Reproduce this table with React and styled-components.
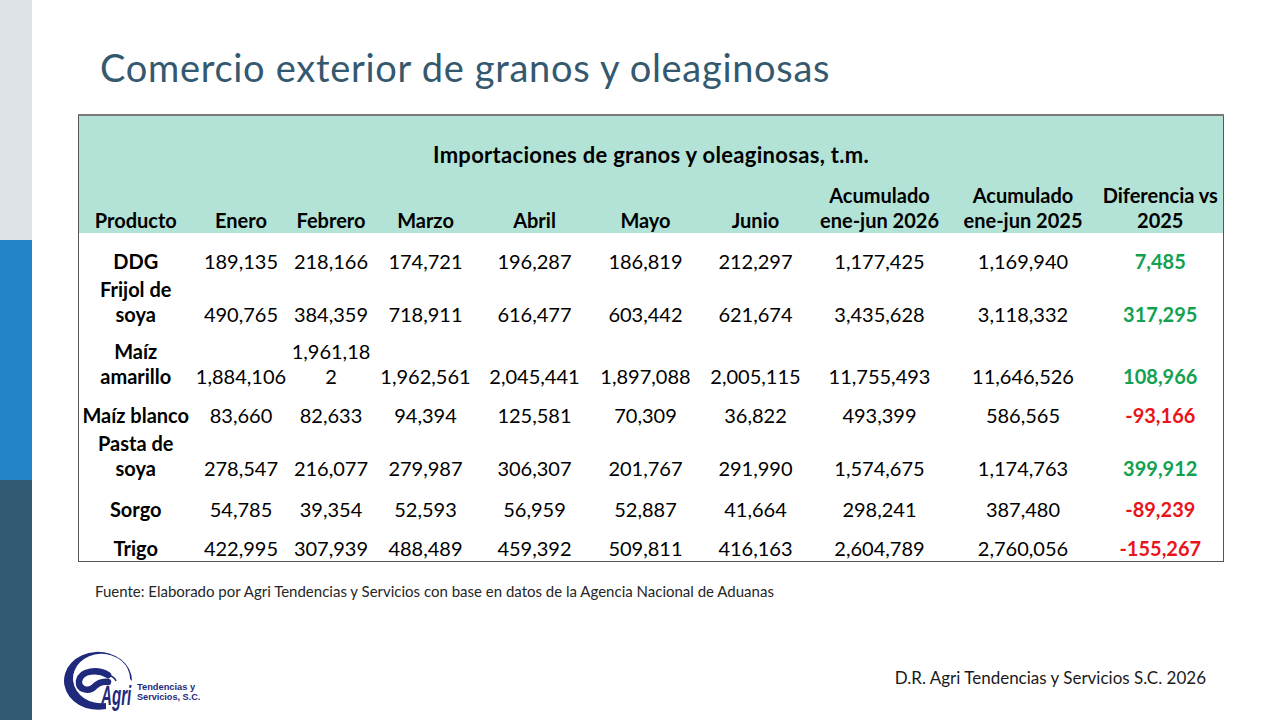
import React from 'react';
import styled, { createGlobalStyle } from 'styled-components';

const Global = createGlobalStyle`
  html, body { margin: 0; padding: 0; }
  body {
    width: 1280px; height: 720px; overflow: hidden; background: #fff;
    font-family: Lato, "Open Sans", "Liberation Sans", sans-serif;
  }
`;

const Slide = styled.div`
  display: flex;
  width: 1280px;
  height: 720px;
  background: #fff;
`;

const Sidebar = styled.aside`
  width: 32px;
  flex-shrink: 0;
  display: flex;
  flex-direction: column;
`;

const Band = styled.div`
  flex: 1;
  background: ${(p) => p.$color};
`;

const Main = styled.main`
  flex: 1;
  min-width: 0;
  display: flex;
  flex-direction: column;
`;

const Title = styled.h1`
  margin: 44px 0 0 68px;
  font-weight: 400;
  font-size: 38px;
  letter-spacing: 0.7px;
  line-height: 46px;
  color: #34596f;
  white-space: nowrap;
`;

const Table = styled.table`
  margin: 24px 0 0 46px;
  width: 1145px;
  table-layout: fixed;
  border-collapse: collapse;
  border-top: 2px solid #7a7a7a;
  border-left: 1px solid #555;
  border-right: 1px solid #555;
  border-bottom: 1px solid #555;
  font-size: 20px;
  line-height: 25px;
  color: #000;
`;

const Head = styled.thead`
  background: #b3e3d6;
`;

const Row = styled.tr`
  height: ${(p) => p.$h}px;
`;

const Caption = styled.th`
  font-weight: 700;
  font-size: 22px;
  letter-spacing: 0.3px;
  text-align: center;
  vertical-align: bottom;
  padding: 0 0 12px;
`;

const HeadCell = styled.th`
  font-weight: 700;
  text-align: center;
  vertical-align: bottom;
  padding: 0;
  white-space: pre-line;
`;

const Cell = styled.td`
  text-align: center;
  vertical-align: bottom;
  padding: 0;
  white-space: pre-line;
  font-weight: ${(p) => (p.$bold ? 700 : 400)};
  color: ${(p) => p.$color || '#000'};
`;

const Source = styled.p`
  margin: 20px 0 0 63px;
  font-size: 15px;
  line-height: 18px;
  color: #262626;
`;

const Footer = styled.footer`
  margin-top: auto;
  display: flex;
  align-items: center;
  justify-content: space-between;
  padding: 0 74px 8px 26px;
`;

const Copyright = styled.div`
  font-size: 17px;
  line-height: 20px;
  color: #1a1a1a;
  margin-bottom: 6px;
`;

const widths = [114, 97, 83, 106, 112, 110, 110, 138, 149, 126];
const headers = [
  'Producto', 'Enero', 'Febrero', 'Marzo', 'Abril', 'Mayo', 'Junio',
  'Acumulado\nene-jun 2026', 'Acumulado\nene-jun 2025', 'Diferencia vs\n2025',
];

const rows = [
  { h: 41, c: ['DDG', '189,135', '218,166', '174,721', '196,287', '186,819', '212,297', '1,177,425', '1,169,940', '7,485'] },
  { h: 53, c: ['Frijol de\nsoya', '490,765', '384,359', '718,911', '616,477', '603,442', '621,674', '3,435,628', '3,118,332', '317,295'] },
  { h: 62, c: ['Maíz\namarillo', '1,884,106', '1,961,18\n2', '1,962,561', '2,045,441', '1,897,088', '2,005,115', '11,755,493', '11,646,526', '108,966'] },
  { h: 39, c: ['Maíz blanco', '83,660', '82,633', '94,394', '125,581', '70,309', '36,822', '493,399', '586,565', '-93,166'] },
  { h: 53, c: ['Pasta de\nsoya', '278,547', '216,077', '279,987', '306,307', '201,767', '291,990', '1,574,675', '1,174,763', '399,912'] },
  { h: 41, c: ['Sorgo', '54,785', '39,354', '52,593', '56,959', '52,887', '41,664', '298,241', '387,480', '-89,239'] },
  { h: 39, c: ['Trigo', '422,995', '307,939', '488,489', '459,392', '509,811', '416,163', '2,604,789', '2,760,056', '-155,267'] },
];

const NAVY = '#1f2a7c';
const LOGO_FONT = "'Liberation Sans', Arial, sans-serif";

function Logo() {
  return (
    <svg width="150" height="62" viewBox="0 0 150 62" aria-label="Agri Tendencias y Servicios, S.C.">
      <path
        d="M 74 31 A 34 29 0 1 0 48 59 L 48 53 A 28.5 24.75 0 1 1 72 29 Z"
        fill={NAVY}
      />
      <path
        d="M 50 25 C 40 19, 23 20, 21 31 C 20 40, 31 42, 36 37 C 40 33, 44 31, 50 32"
        fill="none"
        stroke={NAVY}
        strokeWidth="6.5"
        strokeLinecap="round"
      />
      <path d="M 50 25 C 54 26, 57 28, 58 31" fill="none" stroke={NAVY} strokeWidth="1.5" />
      <text
        transform="translate(43 55) scale(0.56 1)"
        fontFamily={LOGO_FONT}
        fontWeight="700"
        fontStyle="italic"
        fontSize="27"
        fill={NAVY}
      >
        Agri
      </text>
      <text
        transform="translate(79 39.5) scale(0.98 1)"
        fontFamily={LOGO_FONT}
        fontWeight="700"
        fontSize="9.5"
        fill={NAVY}
      >
        Tendencias y
      </text>
      <text
        transform="translate(79 50) scale(0.96 1)"
        fontFamily={LOGO_FONT}
        fontWeight="700"
        fontSize="9.5"
        fill={NAVY}
      >
        Servicios, S.C.
      </text>
    </svg>
  );
}

export default function App() {
  return (
    <>
      <Global />
      <Slide>
        <Sidebar>
          <Band $color="#dee3e7" />
          <Band $color="#2584c6" />
          <Band $color="#335a73" />
        </Sidebar>
        <Main>
          <Title>Comercio exterior de granos y oleaginosas</Title>
          <Table>
            <colgroup>
              {widths.map((w, i) => (
                <col key={i} style={{ width: w }} />
              ))}
            </colgroup>
            <Head>
              <Row $h={64}>
                <Caption colSpan={10}>Importaciones de granos y oleaginosas, t.m.</Caption>
              </Row>
              <Row $h={54}>
                {headers.map((h) => (
                  <HeadCell key={h}>{h}</HeadCell>
                ))}
              </Row>
            </Head>
            <tbody>
              {rows.map((r) => (
                <Row key={r.c[0]} $h={r.h}>
                  {r.c.map((v, i) => {
                    const last = i === r.c.length - 1;
                    const color = last ? (v.startsWith('-') ? '#e8131b' : '#12a150') : undefined;
                    return (
                      <Cell key={i} $bold={i === 0 || last} $color={color}>
                        {v}
                      </Cell>
                    );
                  })}
                </Row>
              ))}
            </tbody>
          </Table>
          <Source>
            Fuente: Elaborado por Agri Tendencias y Servicios con base en datos de la Agencia Nacional de Aduanas
          </Source>
          <Footer>
            <Logo />
            <Copyright>D.R. Agri Tendencias y Servicios S.C. 2026</Copyright>
          </Footer>
        </Main>
      </Slide>
    </>
  );
}
